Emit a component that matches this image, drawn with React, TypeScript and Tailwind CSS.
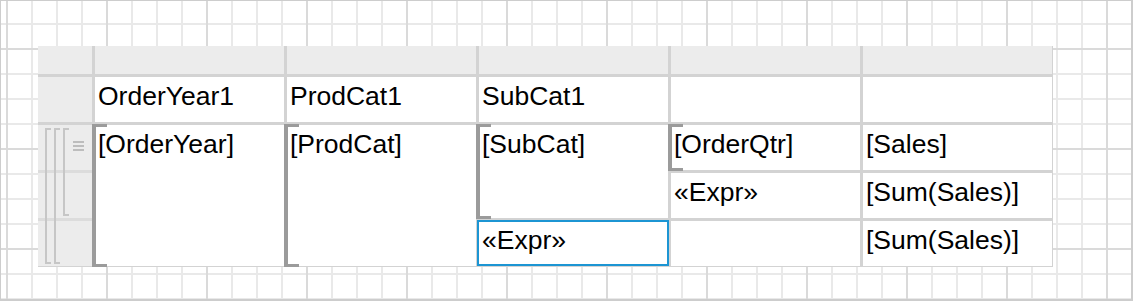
import React from "react";

function Bracket() {
  return (
    <span className="pointer-events-none absolute -left-[3px] -top-px -bottom-px w-[15px] border-l-4 border-t-[3px] border-b-[3px] border-[#9b9b9b]" />
  );
}

function Cell({
  children,
  className = "",
  bracket = false,
  selected = false,
}: {
  children?: React.ReactNode;
  className?: string;
  bracket?: boolean;
  selected?: boolean;
}) {
  return (
    <div className={`relative bg-white pl-[3px] pt-[4px] whitespace-nowrap ${className}`}>
      {bracket && <Bracket />}
      {selected && (
        <span className="pointer-events-none absolute -left-[2px] -right-px -top-px bottom-0 border-2 border-[#1c95d3]" />
      )}
      {children}
    </div>
  );
}

export default function App() {
  return (
    <div className="w-[1133px] h-[301px] overflow-hidden bg-white border-l border-t border-r-2 border-b-2 border-[#cdcdcd] bg-[image:linear-gradient(to_right,#dadada_2px,transparent_2px),linear-gradient(to_bottom,#dadada_2px,transparent_2px),linear-gradient(to_right,#e9e9e9_2px,transparent_2px),linear-gradient(to_bottom,#e9e9e9_2px,transparent_2px)] bg-[size:100px_100px,100px_100px,25px_25px,25px_25px] bg-[position:5px_0px,0px_47px,5px_0px,0px_22px]">
      <div className="ml-[37px] mt-[45px] w-fit grid grid-cols-[54px_repeat(5,189px)] grid-rows-[28px_repeat(4,45px)] gap-[3px] bg-[#d3d3d3] pr-px pb-px font-['Liberation_Sans',Arial,sans-serif] text-[26.5px] leading-[30px] text-black">
        {/* header row */}
        <div className="bg-[#ececec]" />
        <div className="bg-[#ececec]" />
        <div className="bg-[#ececec]" />
        <div className="bg-[#ececec]" />
        <div className="bg-[#ececec]" />
        <div className="bg-[#ececec]" />

        {/* row 1 */}
        <div className="bg-[#ececec]" />
        <Cell>OrderYear1</Cell>
        <Cell>ProdCat1</Cell>
        <Cell>SubCat1</Cell>
        <Cell />
        <Cell />

        {/* rows 2-4 row header */}
        <div className="row-span-3 relative flex flex-col gap-[3px] bg-[#dcdcdc]">
          <div className="flex-1 bg-[#ececec]" />
          <div className="flex-1 bg-[#ececec]" />
          <div className="flex-1 bg-[#ececec]" />
          <svg
            className="absolute inset-0"
            width="54"
            height="141"
            viewBox="0 0 54 141"
          >
            <g fill="#c6c6c6">
              <rect x="7" y="3" width="2" height="136" />
              <rect x="7" y="3" width="6" height="2" />
              <rect x="7" y="137" width="6" height="2" />
              <rect x="16" y="3" width="2" height="136" />
              <rect x="16" y="3" width="6" height="2" />
              <rect x="16" y="137" width="6" height="2" />
              <rect x="25" y="3" width="2" height="88" />
              <rect x="25" y="3" width="6" height="2" />
              <rect x="25" y="89" width="6" height="2" />
            </g>
            <g fill="#bdbdbd">
              <rect x="35" y="16" width="11" height="2" />
              <rect x="35" y="20" width="11" height="2" />
              <rect x="35" y="24" width="11" height="2" />
            </g>
          </svg>
        </div>

        <Cell className="row-span-3" bracket>
          [OrderYear]
        </Cell>
        <Cell className="row-span-3" bracket>
          [ProdCat]
        </Cell>
        <Cell className="row-span-2" bracket>
          [SubCat]
        </Cell>
        <Cell bracket>[OrderQtr]</Cell>
        <Cell>[Sales]</Cell>

        {/* row 3 */}
        <Cell>«Expr»</Cell>
        <Cell>[Sum(Sales)]</Cell>

        {/* row 4 */}
        <Cell selected>«Expr»</Cell>
        <Cell />
        <Cell>[Sum(Sales)]</Cell>
      </div>
    </div>
  );
}
